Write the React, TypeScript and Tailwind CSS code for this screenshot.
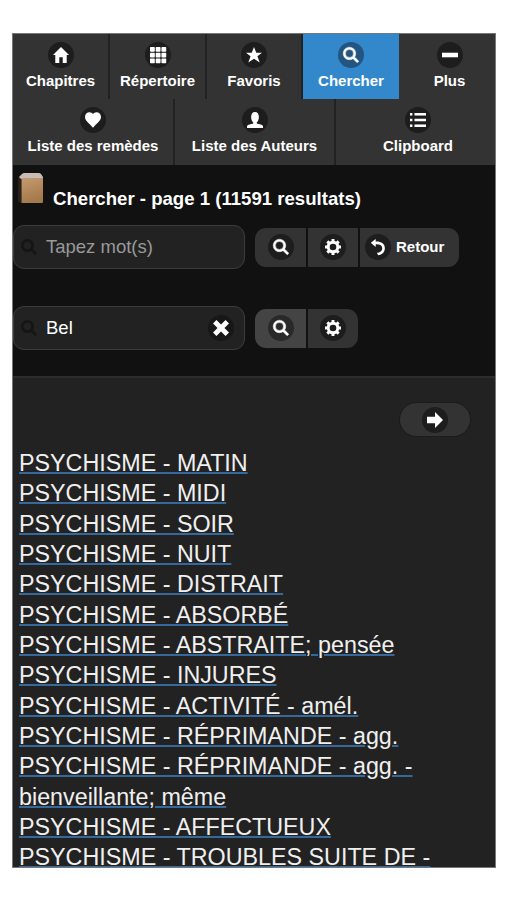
import type { ReactNode } from "react";
import clsx from "clsx";

const ICONS: Record<string, ReactNode> = {
  search: (
    <path
      d="M10.171 8.766c.617-.888.979-1.964.979-3.126a5.5 5.5 0 1 0-5.5 5.5c1.152 0 2.223-.355 3.104-.962l3.684 3.683 1.414-1.414-3.681-3.681zM5.649 9.14a3.5 3.5 0 1 1 0-7 3.5 3.5 0 0 1 0 7z"
      stroke="currentColor"
      strokeWidth="0.4"
    />
  ),
  home: <path d="M7 0 0 7h2v7h3.500V9h3v5H12V7h2z" />,
  grid: [0, 5, 10].map((y) =>
    [0, 5, 10].map((x) => <rect key={`${x}-${y}`} x={x} y={y} width="4.2" height="4.2" rx="0.6" />),
  ),
  star: <path d="m7 0 2 5h5l-4 3 2 5.5L7 10.3 2 13.5 4 8 0 5h5z" />,
  minus: <rect y="5" width="14" height="4" />,
  heart: (
    <path d="M7 1.9C6.3.9 5.2.3 4 .3 1.7.3 0 2 0 4.3c0 3.6 4 5.7 7 9.4 3-3.7 7-5.8 7-9.4C14 2 12.3.3 10 .3 8.8.3 7.7.9 7 1.9z" />
  ),
  user: (
    <path d="M7 0C4.900 0 3.600 1.700 3.600 4.300c0 2 .700 3.800 1.900 4.800 0 .700-.200 1-.700 1.200C2 10.800 0 11.400 0 12.500V14h14v-1.500c0-1.100-2-1.700-4.800-2.200-.500-.200-.700-.500-.700-1.200 1.200-1 1.900-2.800 1.900-4.800C10.400 1.700 9.100 0 7 0z" />
  ),
  bullets: [1, 6, 11].map((y) => (
    <g key={y}>
      <rect y={y - 0.1} width="2.1" height="2.2" />
      <rect x="3.9" y={y - 0.1} width="10.1" height="2.2" />
    </g>
  )),
  gear: (
    <>
      <circle cx="7" cy="7" r="4.2" fill="none" stroke="currentColor" strokeWidth="2.6" />
      {[0, 45, 90, 135].map((a) => (
        <path key={a} d="M5.7 0h2.6v2.5H5.7zM5.7 11.5h2.600V14H5.700z" transform={`rotate(${a} 7 7)`} />
      ))}
    </>
  ),
  back: <path d="M5 0 .7 3.300 5 7V4.600c3.600-.200 5.700 1 5.700 3.400 0 2.300-2 3.900-4.700 4.100L7.200 14.300C10.700 13.600 13 11.300 13 8c0-3.900-3.100-6-8-5.800z" />,
  remove: <path d="m14 3-3-3-4 4-4-4-3 3 4 4-4 4 3 3 4-4 4 4 3-3-4-4z" />,
  next: <path d="M7 0v4.2H0v5.6h7V14l7-7z" />,
};

function Glyph({ name, className }: { name: string; className?: string }) {
  return (
    <svg viewBox="0 0 14 14" fill="currentColor" className={clsx("h-4 w-4 overflow-visible", className)} aria-hidden>
      {ICONS[name]}
    </svg>
  );
}

function Disc({ name, className }: { name: string; className?: string }) {
  return (
    <span
      className={clsx(
        "flex h-[26px] w-[26px] shrink-0 items-center justify-center rounded-full text-white",
        className ?? "bg-[#1d1d1d]",
      )}
    >
      <Glyph name={name} />
    </span>
  );
}

function NavItem({ icon, label, active, last }: { icon: string; label: string; active?: boolean; last?: boolean }) {
  return (
    <button
      className={clsx(
        "flex h-full flex-col items-center pt-[8px] text-[15px] leading-[18px] font-bold whitespace-nowrap text-white",
        active ? "bg-[#3388cc]" : "bg-[#333]",
        !last && !active && "border-r-2 border-[#222]",
        last && "pl-[5px]",
      )}
    >
      <Disc name={icon} className={active ? "bg-[#225580]" : undefined} />
      <span className="mt-[4px]">{label}</span>
    </button>
  );
}

function SearchField({ value }: { value?: string }) {
  return (
    <div className="flex h-[44px] w-[232px] items-center rounded-[11px] border border-[#3c3c3c] bg-[#222] pr-[10px] pl-[7px] text-[18.5px]">
      <Glyph name="search" className="text-[#151515]" />
      <span className={clsx("ml-[9px] grow", value ? "text-white" : "text-[#999]")}>{value ?? "Tapez mot(s)"}</span>
      {value && <Disc name="remove" className="bg-[#171717]" />}
    </div>
  );
}

const RESULTS = [
  "PSYCHISME - MATIN",
  "PSYCHISME - MIDI",
  "PSYCHISME - SOIR",
  "PSYCHISME - NUIT",
  "PSYCHISME - DISTRAIT",
  "PSYCHISME - ABSORBÉ",
  "PSYCHISME - ABSTRAITE; pensée",
  "PSYCHISME - INJURES",
  "PSYCHISME - ACTIVITÉ - amél.",
  "PSYCHISME - RÉPRIMANDE - agg.",
  "PSYCHISME - RÉPRIMANDE - agg. - bienveillante; même",
  "PSYCHISME - AFFECTUEUX",
  "PSYCHISME - TROUBLES SUITE DE -",
];

export default function App() {
  return (
    <div className="h-[900px] bg-white pt-[34px] pl-[13px] font-['Liberation_Sans',Arial,sans-serif]">
      <main className="flex h-[833px] w-[482px] flex-col overflow-hidden bg-[#222] shadow-[0_0_0_1px_#777]">
        <nav className="shrink-0">
          <div className="grid h-[65px] grid-cols-[97px_97px_96px_96px_96px]">
            <NavItem icon="home" label="Chapitres" />
            <NavItem icon="grid" label="Répertoire" />
            <NavItem icon="star" label="Favoris" />
            <NavItem icon="search" label="Chercher" active />
            <NavItem icon="minus" label="Plus" last />
          </div>
          <div className="grid h-[66px] grid-cols-[162px_161px_159px]">
            <NavItem icon="heart" label="Liste des remèdes" />
            <NavItem icon="user" label="Liste des Auteurs" />
            <NavItem icon="bullets" label="Clipboard" last />
          </div>
        </nav>

        <header className="h-[213px] shrink-0 border-b-2 border-[#2c2c2c] bg-[#111] text-white">
          <div className="flex h-[60px] pt-[6px] pl-[3px]">
            <svg viewBox="0 0 28 34" className="h-[34px] w-[28px]" aria-hidden>
              <defs>
                <linearGradient id="cover" x1="0" y1="0" x2="0.3" y2="1">
                  <stop offset="0" stopColor="#c49a70" />
                  <stop offset="1" stopColor="#a47a4b" />
                </linearGradient>
              </defs>
              <path d="M2 7 5 3v29H4L2 30z" fill="#2c211a" />
              <path d="m3 6 3-3q1-1 2-1h15q1 0 2 1l2 3v2H5z" fill="#c9bcb6" />
              <path d="M5.500 7H27v24q0 1-1 1H5.500z" fill="url(#cover)" />
            </svg>
            <h1 className="mt-[17px] ml-[9px] text-[18.6px] leading-[22px] font-bold">
              Chercher - page 1 (11591 resultats)
            </h1>
          </div>
          <div className="flex items-center gap-[10px]">
            <SearchField />
            <div className="flex h-[39px] gap-[2px] overflow-hidden rounded-[11px] text-[15px] font-bold">
              <button className="flex w-[51px] items-center justify-center bg-[#333]">
                <Disc name="search" />
              </button>
              <button className="flex w-[50px] items-center justify-center bg-[#333]">
                <Disc name="gear" />
              </button>
              <button className="flex w-[99px] items-center gap-[5px] bg-[#333] pl-[5px]">
                <Disc name="back" />
                Retour
              </button>
            </div>
          </div>
          <div className="mt-[37px] flex items-center gap-[10px]">
            <SearchField value="Bel" />
            <div className="flex h-[39px] gap-[2px] overflow-hidden rounded-[11px]">
              <button className="flex w-[51px] items-center justify-center bg-[#444]">
                <Disc name="search" className="bg-[#292929]" />
              </button>
              <button className="flex w-[50px] items-center justify-center bg-[#333]">
                <Disc name="gear" />
              </button>
            </div>
          </div>
        </header>

        <section className="pt-[25px] pl-[6px]">
          <div className="flex justify-end pr-[25px]">
            <button className="flex h-[33px] w-[70px] items-center justify-center rounded-full bg-[#333] shadow-[0_0_0_1px_#1c1c1c]">
              <Disc name="next" />
            </button>
          </div>
          <ul className="mt-[12px] w-[440px] text-[23.3px] leading-[30.33px] text-[#f0f0f0]">
            {RESULTS.map((r) => (
              <li key={r}>
                <a className="underline decoration-[#35689b] decoration-[1.5px] underline-offset-[1px]">{r}</a>
              </li>
            ))}
          </ul>
        </section>
      </main>
    </div>
  );
}
